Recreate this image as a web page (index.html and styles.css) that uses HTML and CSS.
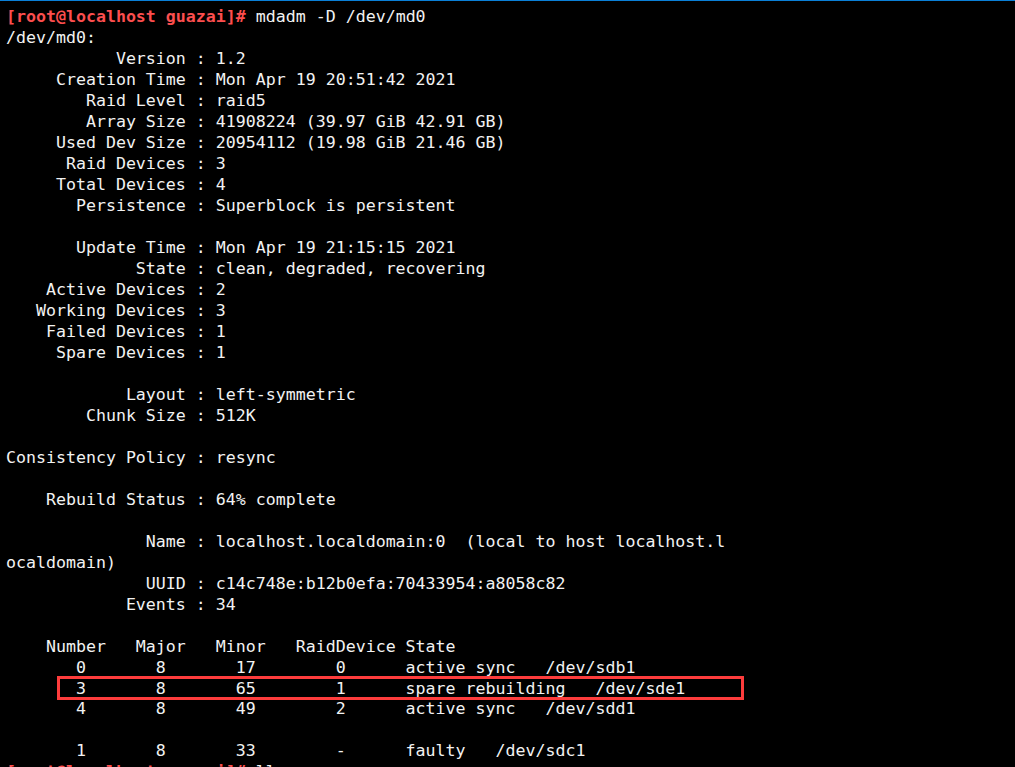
FILE: index.html
```html
<!DOCTYPE html>
<html lang="en">
<head>
    <meta charset="UTF-8">
    <meta name="viewport" content="width=device-width, initial-scale=1.0">
    <title>mdadm -D /dev/md0</title>
    <link rel="stylesheet" href="styles.css">
</head>
<body>
    <div id="window">
        <div class="topline"></div>
        <div id="term">
<pre class="screen"><span class="prompt">[root@localhost guazai]#</span> mdadm -D /dev/md0
/dev/md0:
           Version : 1.2
     Creation Time : Mon Apr 19 20:51:42 2021
        Raid Level : raid5
        Array Size : 41908224 (39.97 GiB 42.91 GB)
     Used Dev Size : 20954112 (19.98 GiB 21.46 GB)
      Raid Devices : 3
     Total Devices : 4
       Persistence : Superblock is persistent

       Update Time : Mon Apr 19 21:15:15 2021
             State : clean, degraded, recovering
    Active Devices : 2
   Working Devices : 3
    Failed Devices : 1
     Spare Devices : 1

            Layout : left-symmetric
        Chunk Size : 512K

Consistency Policy : resync

    Rebuild Status : 64% complete

              Name : localhost.localdomain:0  (local to host localhost.l
ocaldomain)
              UUID : c14c748e:b12b0efa:70433954:a8058c82
            Events : 34

    Number   Major   Minor   RaidDevice State
       0       8       17        0      active sync   /dev/sdb1
       3       8       65        1      spare rebuilding   /dev/sde1
       4       8       49        2      active sync   /dev/sdd1

       1       8       33        -      faulty   /dev/sdc1
<span class="prompt">[root@localhost guazai]#</span> ll</pre>
            <div class="mark"></div>
        </div>
    </div>
</body>
</html>
```

FILE: styles.css
```css
body{
    margin: 0;
    background: #000;
    height: 767px;
    overflow: hidden;
}
#window{
    display: flex;
    flex-direction: column;
}
.topline{
    height: 1px;
    background: #0a7fd6;
}
#term{
    position: relative;
    padding: 6px 6px 0 6px;
}
.screen{
    margin: 0;
    font-family: "DejaVu Sans Mono", "Liberation Mono", monospace;
    font-size: 16.6px;
    line-height: 20.99px;
    color: #f2f2f2;
}
.prompt{
    color: #fc4e4e;
    font-weight: bold;
}
.mark{
    position: absolute;
    left: 57px;
    top: 675px;
    width: 681px;
    height: 18px;
    border: 3px solid #fd3c3c;
}
```
